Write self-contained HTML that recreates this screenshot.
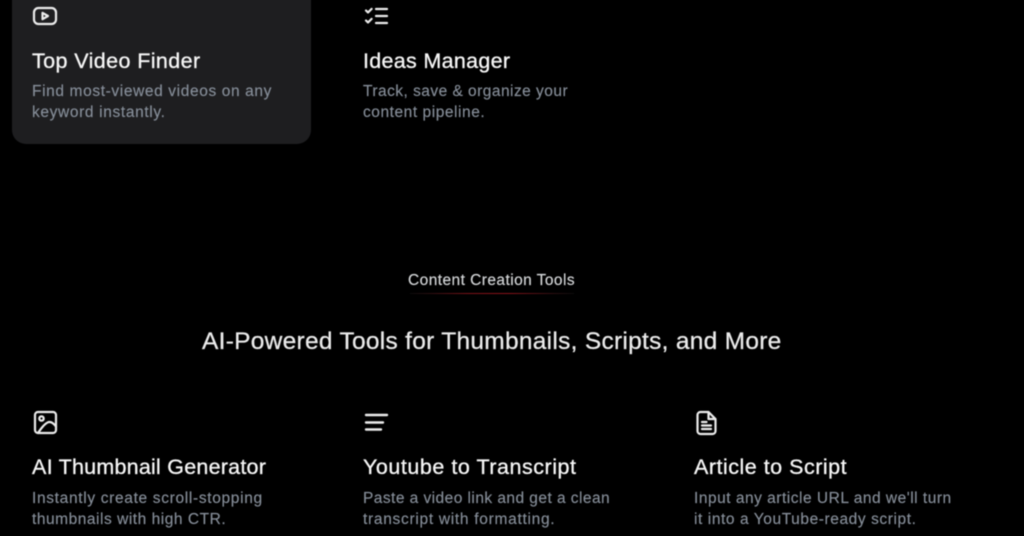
<!DOCTYPE html>
<html lang="en">
<head>
<meta charset="utf-8">
<title>Content Creation Tools</title>
<style>
html,body{margin:0;padding:0;background:#000;}
body{width:1024px;height:536px;position:relative;overflow:hidden;font-family:"Liberation Sans",sans-serif;}
#wrap{position:absolute;left:0;top:0;width:1024px;height:536px;filter:blur(0.45px);}
.card{position:absolute;left:12px;top:-20px;width:299px;height:164px;background:#1e1e20;border-radius:14px;}
.t,.d,.h,.e{position:absolute;white-space:nowrap;margin:0;font-weight:normal;}
.t{font-size:21.5px;line-height:26px;color:#f7f7f7;-webkit-text-stroke:.3px #f7f7f7;}
.d{font-size:15.5px;line-height:21px;color:#868e99;-webkit-text-stroke:.15px #868e99;}
.h{left:202px;top:327px;font-size:24.5px;line-height:30px;color:#ececec;letter-spacing:.28px;-webkit-text-stroke:.25px #ececec;}
.e{left:408px;top:271px;font-size:15.5px;line-height:20px;color:#d6d8da;letter-spacing:.44px;-webkit-text-stroke:.15px #d6d8da;}
.u{position:absolute;left:410px;top:293px;width:164px;height:1px;background:linear-gradient(90deg,#0c0c0c,#2a0e10 12%,#7a1218 35%,#8a1219 60%,#2a0e10 88%,#0c0c0c);}
svg{position:absolute;fill:none;stroke:#ececec;stroke-width:2.2;stroke-linecap:round;stroke-linejoin:round;}
</style>
</head>
<body>
<div id="wrap">
<div class="card"></div>

<svg style="left:32px;top:3px" width="26" height="26" viewBox="0 0 26 26"><rect x="2" y="5" width="22" height="16" rx="4.500"/><path d="M10.500 9.800l5.500 3.200-5.500 3.200z"/></svg>
<h3 class="t" style="left:32px;top:48px;letter-spacing:.4px">Top Video Finder</h3>
<p class="d" style="left:32px;top:81px;letter-spacing:.62px">Find most-viewed videos on any</p>
<p class="d" style="left:32px;top:102px;letter-spacing:.64px">keyword instantly.</p>

<svg style="left:363px;top:3px" width="26" height="26" viewBox="0 0 26 26"><path d="M3 7.500l2 2 3.600-3.600M3 17.500l2 2 3.600-3.600M13 6h11M13 13h11M13 20h11"/></svg>
<h3 class="t" style="left:363px;top:48px;letter-spacing:.3px">Ideas Manager</h3>
<p class="d" style="left:363px;top:81px;letter-spacing:.47px">Track, save &amp; organize your</p>
<p class="d" style="left:363px;top:102px;letter-spacing:.55px">content pipeline.</p>

<div class="e">Content Creation Tools</div>
<div class="u"></div>
<h2 class="h">AI-Powered Tools for Thumbnails, Scripts, and More</h2>

<svg style="left:33px;top:410px" width="26" height="26" viewBox="0 0 26 26"><rect x="2" y="2" width="21" height="21" rx="3"/><circle cx="8.500" cy="8.500" r="2.200"/><path d="M5 23C9 17 13 12 16.500 12c2.500 0 5 2.500 6.500 4.500"/></svg>
<h3 class="t" style="left:32px;top:454px;letter-spacing:.23px">AI Thumbnail Generator</h3>
<p class="d" style="left:32px;top:488px;letter-spacing:.67px">Instantly create scroll-stopping</p>
<p class="d" style="left:32px;top:509px;letter-spacing:.53px">thumbnails with high CTR.</p>

<svg style="left:363px;top:410px" width="26" height="26" viewBox="0 0 26 26"><path d="M3 5h21M3 12.500h17M3 19.500h15" stroke-width="2.400"/></svg>
<h3 class="t" style="left:363px;top:454px;letter-spacing:.53px">Youtube to Transcript</h3>
<p class="d" style="left:363px;top:488px;letter-spacing:.45px">Paste a video link and get a clean</p>
<p class="d" style="left:363px;top:509px;letter-spacing:.71px">transcript with formatting.</p>

<svg style="left:694px;top:410px" width="26" height="26" viewBox="0 0 26 26"><path d="M3.500 5a3 3 0 0 1 3-3h8l7 7v12a3 3 0 0 1-3 3h-12a3 3 0 0 1-3-3zM14.500 2v7h7M8 12h4.500M8 15.500h9M8 19h9"/></svg>
<h3 class="t" style="left:694px;top:454px;letter-spacing:.5px">Article to Script</h3>
<p class="d" style="left:694px;top:488px;letter-spacing:.51px">Input any article URL and we'll turn</p>
<p class="d" style="left:694px;top:509px;letter-spacing:.58px">it into a YouTube-ready script.</p>
</div>
</body>
</html>
